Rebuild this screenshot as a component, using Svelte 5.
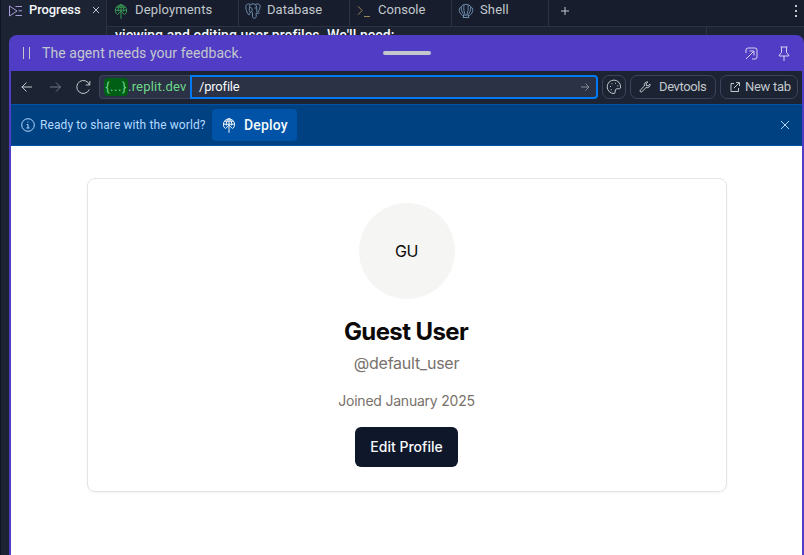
<script>
  const tabs = [
    { icon: 'database', label: 'Database', width: 111, spacing: 0.04 },
    { icon: 'console', label: 'Console', width: 102, spacing: 0.03 },
    { icon: 'shell', label: 'Shell', width: 97, spacing: 0.15 }
  ];
</script>

{#snippet deployIcon(size)}
  <svg width={size} height={size} viewBox="0 0 16 16" class="line">
    <path d="M3.8 11.2A5.6 5.6 0 1 1 12.2 11.2M2.4 7.2h11.2M3.4 4.2h9.2M8 1v14.8M8 1.3C5.6 3 5 6 5.4 8.5M8 1.3c2.4 1.7 3 4.7 2.6 7.2M4.4 11.8L8 8.2l3.6 3.6" />
  </svg>
{/snippet}

<div class="app">
  <nav class="tabs">
    <div class="tab active" style:width="106px">
      <svg class="line progress" width="15" height="14" viewBox="0 0 15 14"><path d="M1.5 2v10l7.5-5zM7.5 2.5H14M10.5 6.8H14M7.5 11.5H14" /></svg>
      <span class="name">Progress</span>
      <svg class="line x" width="8" height="8" viewBox="0 0 8 8"><path d="M1 1l6 6M7 1L1 7" /></svg>
    </div>
    <div class="tab" style:width="132px">
      <span class="icon green">{@render deployIcon(16)}</span>
      <span class="name deployments">Deployments</span>
    </div>
    {#each tabs as tab}
      <div class="tab" style:width="{tab.width}px">
        <span class="icon {tab.icon}">
          {#if tab.icon === 'database'}
            <svg class="line" width="16" height="16" viewBox="0 0 16 16"><path d="M4.8 11.8C2.5 12.5.8 6.5.8 3.7.8.8 3.7.6 5.6 1.5 7.5.5 9 .7 10.2 1.5c2.5-1.3 5-.4 5 1.7 0 2.4-1.5 4.8-2.5 6.2M5.6 1.5C4.2 3 4.5 5.2 4.3 7.5c0 1.7 1.8 2.2 2.4 1.2.6-1 .5-3 0-3.7-.6-.6-1.8-.6-2.3 0M10.2 1.5C11.7 3 12 5 11.7 7c-.2 1.2.3 2 1 2.4M6.7 8.8C5 10 3.4 9.8 4.8 11.3M7.5 9.5v4.2c0 2 3.7 2 3.7-.2V10c1.5.5 3 .4 3.5-.2M9.5 5h1.8" /></svg>
          {:else if tab.icon === 'console'}
            <svg class="line" width="16" height="16" viewBox="0 0 16 16"><path d="M2 3.3l4.2 4.2L2 11.7M8 13.5h6" /></svg>
          {:else}
            <svg class="line" width="16" height="16" viewBox="0 0 16 16"><path d="M6 12.5H4.5C2.5 11 1.2 9.3 1.2 7.2c0-1.8.8-2.9 2-3.3C4 2.2 5.8 1.4 8 1.4s4 .8 4.8 2.5c1.2.4 2 1.5 2 3.3 0 2.1-1.3 3.8-3.3 5.3H10l1 2H5zM6.8 12.5C4.2 10 3 7 3.2 3.9M7.5 12.5C6 9.5 5.4 5.5 6 2M9.2 12.5c2.6-2.5 3.8-5.5 3.6-8.6M8.5 12.5c1.5-3 2.1-7 1.5-10.5" /></svg>
          {/if}
        </span>
        <span class="name" style:letter-spacing="{tab.spacing}px">{tab.label}</span>
      </div>
    {/each}
    <svg class="line plus" width="10" height="10" viewBox="0 0 10 10"><path d="M5 1v8M1 5h8" /></svg>
    <svg class="dots" width="4" height="14" viewBox="0 0 4 14"><path d="M1 1h2v2H1zM1 6h2v2H1zM1 11h2v2H1z" /></svg>
  </nav>
  <div class="behind"><p>viewing and editing user profiles. We'll need:</p></div>

  <section class="panel">
    <header>
      <svg class="line pause" width="10" height="12" viewBox="0 0 10 12"><path d="M2.5 0v12M8.5 0v12" /></svg>
      <span class="notice">The agent needs your feedback.</span>
      <i class="grip"></i>
      <svg class="line pop" width="13" height="13" viewBox="0 0 13 13"><path d="M1 6V3a2 2 0 0 1 2-2h7a2 2 0 0 1 2 2v7a2 2 0 0 1-2 2H7M1 12l8-8M4.5 4H9v4.5" /></svg>
      <svg class="line pin" width="12" height="15" viewBox="0 0 12 15"><path d="M2.5 1h7M3.5 1v5.5L1.3 9v1h9.4V9L8.5 6.5V1M6 10v5" /></svg>
    </header>

    <div class="toolbar">
      <svg class="line back" width="12" height="12" viewBox="0 0 12 12"><path d="M11 6H.5M5.5 1.5L1 6l4.5 4.5" /></svg>
      <svg class="line forward" width="12" height="12" viewBox="0 0 12 12"><path d="M0 6h10.5M6 1.5L10.5 6 6 10.5" /></svg>
      <svg class="line reload" width="16" height="16" viewBox="0 0 16 16"><path d="M14.8 2v4h-4M14.5 6A6.5 6.5 0 1 0 14.3 10.5" /></svg>
      <div class="host"><b>{'{...}'}</b><span>.replit.dev</span></div>
      <div class="path"><span>/profile</span>
        <svg class="line" width="10" height="10" viewBox="0 0 10 10"><path d="M1 5h8M5.5 1.5L9 5 5.5 8.5" /></svg>
      </div>
      <button class="palette" aria-label="Theme">
        <svg class="line" width="16" height="16" viewBox="0 0 16 16"><path d="M8 14.5A6.7 6.7 0 1 1 14.6 8c0 1.5-1 2-2.2 1.8-2-.4-3 .3-3.2 2.2-.1 1.5 0 2.5-1.2 2.5z" /><path d="M4 7h1v1H4zM5.5 4.3h1v1h-1zM9 3.8h1v1H9zM11.3 6.2h1v1h-1zM4.7 10.2h1v1h-1z" fill="currentColor" stroke="none" /></svg>
      </button>
      <button class="dev">
        <svg class="line" width="12" height="12" viewBox="0 0 12 12"><path d="M1.3 9L5.4 5C4.8 2.5 6.5.6 9 1L7.3 2.8v1.9h1.9L11 3c.4 2.5-1.5 4.2-4 3.6l-4.1 4.1C1.8 11.7.3 10.2 1.3 9z" /></svg>
        <span>Devtools</span>
      </button>
      <button class="new">
        <svg class="line" width="10" height="10" viewBox="0 0 10 10"><path d="M4 1.5H1v8h7.5V6M6 .6h3.5v3.5M9.3.7L4 6" /></svg>
        <span>New tab</span>
      </button>
    </div>

    <div class="banner">
      <svg class="line info" width="14" height="14" viewBox="0 0 14 14"><circle cx="7" cy="7" r="6.3" /><path d="M5.8 6.5H7V10M5.5 10h3M6.5 4h1" /></svg>
      <span class="question">Ready to share with the world?</span>
      <button class="deploy">{@render deployIcon(16)}<span>Deploy</span></button>
      <svg class="line close" width="10" height="10" viewBox="0 0 10 10"><path d="M1 1l8 8M9 1L1 9" /></svg>
    </div>

    <main>
      <article>
        <div class="avatar">GU</div>
        <h1>Guest User</h1>
        <p class="handle">@default_user</p>
        <p class="joined">Joined January 2025</p>
        <button class="edit">Edit Profile</button>
      </article>
    </main>
  </section>
</div>

<style>
  .app {
    position: relative;
    box-sizing: border-box;
    height: 555px;
    overflow: hidden;
    border-left: 1px solid #0e1525;
    background: #1c2333;
    color: #c2c8cc;
    font: 500 13px/18px Roboto, "Liberation Sans", sans-serif;
  }
  .app * { box-sizing: border-box; }
  svg { display: block; flex: none; }
  span, b { white-space: nowrap; }
  .line { fill: none; stroke: currentColor; stroke-width: 1; }
  button { font: inherit; color: inherit; }
  .tabs { display: flex; height: 27px; background: #171d2d; border-bottom: 1px solid #2b3245; }
  .tab { display: flex; height: 27px; padding: 1px 0 8px 7px; align-items: center; border: solid #2b3245; border-width: 0 1px 1px 0; font-weight: 450; }
  .active { position: relative; background: #1c2333; color: #f5f9fc; border-bottom: 0; font-weight: 500; }
  .tab .name { letter-spacing: 0.05px; }
  .tab .deployments { letter-spacing: 0.15px; }
  .active .name { margin-left: 6px; letter-spacing: -0.1px; }
  .progress { color: #a89bd9; margin-top: 2px; }
  .x { margin-left: 11px; color: #c2c8cc; }
  .icon { width: 16px; margin: 3px 6px 0 -1px; }
  .green { color: #399b55; }
  .database, .shell { color: #6c8cab; }
  .console { color: #9a8755; }
  .tabs > svg { align-self: flex-start; }
  .plus { margin: 6px 0 0 11px; }
  .dots { margin: 4px 6px 0 auto; fill: currentColor; }
  .behind { width: 601px; height: 28px; margin-left: 105px; border: solid #2b3245; border-width: 0 1px; overflow: hidden; }
  .behind p { margin: 0 0 0 8px; color: #f5f9fc; font-size: 14px; line-height: 16px; letter-spacing: 0.06px; white-space: nowrap; }
  .panel {
    position: absolute;
    inset: 35px 0 0 8px;
    display: flex;
    flex-direction: column;
    padding: 0 2px;
    background: #513cc5;
    border-radius: 8px 8px 0 0;
    overflow: hidden;
  }
  header { display: flex; height: 36px; align-items: center; padding: 0 12px 0 10px; font-size: 14px; }
  .notice { width: 200px; margin-left: 11px; font-weight: 400; letter-spacing: 0.07px; }
  .grip { width: 48px; height: 4px; margin-left: 141px; border-radius: 2px; background: #c2c8cc; }
  .pop { margin-left: auto; color: #d6d2ee; }
  .pin { margin-left: 20px; color: #d6d2ee; }
  .toolbar { display: flex; height: 33px; align-items: center; padding: 0 4px 1px 10px; background: #1c2333; }
  .forward { margin-left: 17px; color: #72798a; }
  .reload { margin-left: 13px; }
  .host { display: flex; width: 91px; height: 24px; margin-left: 8px; padding-left: 4px; align-items: center; border: 1px solid #3c445c; border-right: 0; border-radius: 4px 0 0 4px; background: #2b3245; color: #6cd989; }
  .host b { width: 24px; height: 18px; border-radius: 4px; background: #005e15; font-weight: 400; text-align: center; line-height: 17px; letter-spacing: 0.5px; }
  .host span { font-weight: 450; letter-spacing: 0.2px; }
  .path { display: flex; flex: 1; height: 24px; align-items: center; justify-content: space-between; padding: 0 6px 0 7px; border: 2px solid #0079f2; border-radius: 0 4px 4px 0; background: #2b3245; color: #f5f9fc; }
  .path span { font-weight: 450; letter-spacing: -0.2px; }
  .path svg { color: #858b96; }
  .toolbar button { display: flex; height: 24px; align-items: center; margin: 0 0 0 4px; padding: 0 0 0 8px; border: 1px solid #3c445c; border-radius: 7px; background: #1c2333; }
  .toolbar .palette { width: 24px; padding-left: 3px; }
  .toolbar .dev { width: 86px; gap: 8px; font-weight: 450; letter-spacing: -0.4px; }
  .toolbar .new { width: 78px; padding-left: 9px; gap: 5px; font-weight: 450; letter-spacing: -0.3px; }
  .banner { display: flex; height: 42px; align-items: center; padding: 0 12px 0 10px; border: solid #0053a6; border-width: 1px 0; background: #004182; }
  .info, .close { color: #b3d9ff; }
  .question { width: 172px; margin-left: 5px; color: #b3d9ff; font-size: 12px; font-weight: 400; letter-spacing: 0.1px; }
  .deploy { display: flex; width: 85px; height: 32px; align-items: center; gap: 7px; padding: 0 0 0 9px; border: 0; border-radius: 4px; background: #0053a6; color: #f5f9fc; }
  .deploy span { font-size: 14px; letter-spacing: 0.15px; }
  .close { margin-left: auto; }
  main { flex: 1; padding: 32px 75px 0 76px; background: #fff; }
  article { display: flex; flex-direction: column; align-items: center; height: 314px; padding-top: 24px; border: 1px solid #e5e5e5; border-radius: 8px; box-shadow: 0 1px 2px #0000000d; color: #0c0a09; font-family: Inter, "Liberation Sans", sans-serif; font-weight: 400; }
  .avatar { display: flex; width: 96px; height: 96px; align-items: center; justify-content: center; padding-right: 1px; border-radius: 50%; background: #f5f5f4; font-size: 16px; letter-spacing: -0.5px; }
  h1 { margin: 17px 2px 0 0; font-size: 24px; line-height: 32px; font-weight: 700; letter-spacing: -0.6px; }
  .handle { margin: 3px 1px 0 0; font-size: 16px; line-height: 24px; color: #78716c; letter-spacing: -0.25px; }
  .joined { margin: 16px 1px 0 0; font-size: 14px; line-height: 20px; color: #78716c; letter-spacing: -0.22px; }
  .edit { width: 103px; height: 40px; margin: 16px 1px 0 0; padding: 0; border: 0; border-radius: 6px; background: #0f172a; color: #f8fafc; font-size: 14px; font-weight: 500; }
</style>
